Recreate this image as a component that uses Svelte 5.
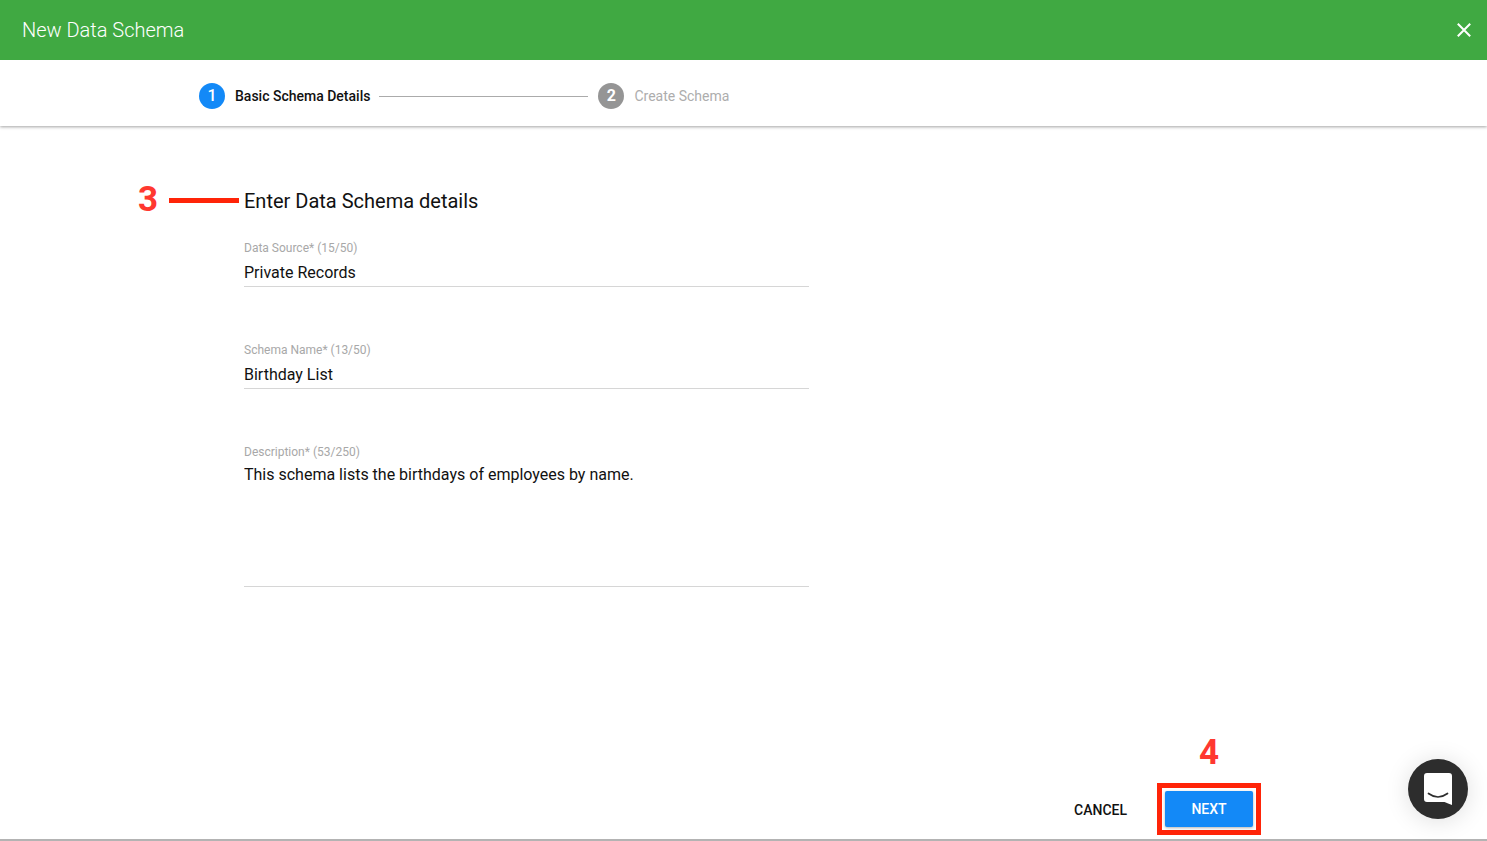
<script>
  let source = $state('Private Records');
  let name = $state('Birthday List');
  let description = $state('This schema lists the birthdays of employees by name.');
</script>

<div class="page">
  <header class="bar">
    <h1>New Data Schema</h1>
    <button class="close" type="button" aria-label="Close">
      <svg width="14" height="14" viewBox="0 0 14 14" aria-hidden="true">
        <path d="M0.8 0.8 13.2 13.2M13.2 0.8 0.8 13.2" stroke="#fff" stroke-width="2" />
      </svg>
    </button>
  </header>

  <nav class="steps" aria-label="Progress">
    <span class="dot active">1</span>
    <span class="step current">Basic Schema Details</span>
    <span class="line"></span>
    <span class="dot">2</span>
    <span class="step">Create Schema</span>
  </nav>

  <form class="content" onsubmit={(e) => e.preventDefault()}>
    <div class="fields">
      <div class="heading">
        <div class="callout"><span class="mark">3</span><span class="pointer"></span></div>
        <h2>Enter Data Schema details</h2>
      </div>
      <div class="field">
        <label for="source">Data Source* ({source.length}/50)</label>
        <input id="source" type="text" maxlength="50" bind:value={source} />
      </div>
      <div class="field">
        <label for="name">Schema Name* ({name.length}/50)</label>
        <input id="name" type="text" maxlength="50" bind:value={name} />
      </div>
      <div class="field">
        <label for="description">Description* ({description.length}/250)</label>
        <textarea id="description" maxlength="250" bind:value={description}></textarea>
      </div>
    </div>

    <footer class="actions">
      <button class="cancel" type="button">CANCEL</button>
      <div class="next-group">
        <span class="mark">4</span>
        <div class="frame"><button class="next" type="submit">NEXT</button></div>
      </div>
    </footer>
  </form>

  <button class="chat" type="button" aria-label="Open chat">
    <svg width="28" height="32" viewBox="0 0 28 32" aria-hidden="true">
      <path d="M3 0H25Q28 0 28 3V32Q24 30.5 20.5 29H3Q0 29 0 26V3Q0 0 3 0Z" fill="#fff" />
      <path d="M4.5 20.5Q14 27.5 23.5 20.5" fill="none" stroke="#2d2d2d" stroke-width="1.7" stroke-linecap="round" />
    </svg>
  </button>
</div>

<style>
  :global(body) {
    margin: 0;
    background: #fff;
  }
  .page {
    box-sizing: border-box;
    min-height: 100vh;
    display: flex;
    flex-direction: column;
    border-bottom: 2px solid #b3b3b3;
    font-family: Roboto, sans-serif;
    color: #111;
  }
  button,
  input,
  textarea {
    font-family: inherit;
    color: inherit;
    border: 0;
    padding: 0;
    margin: 0;
    background: none;
    border-radius: 0;
  }
  button {
    cursor: pointer;
  }
  .bar {
    display: flex;
    align-items: center;
    justify-content: space-between;
    height: 60px;
    padding: 0 16px 0 22px;
    background: #40a942;
    color: #fff;
    position: relative;
  }
  h1,
  h2 {
    margin: 0;
    font-size: 20px;
    line-height: 24px;
    font-weight: 400;
  }
  h1 {
    font-weight: 300;
  }
  .close {
    display: flex;
  }
  .steps {
    display: flex;
    align-items: center;
    height: 66px;
    box-sizing: border-box;
    padding: 6px 199px 0;
    box-shadow: 0 1px 3px rgba(0, 0, 0, 0.36);
  }
  .dot {
    width: 26px;
    height: 26px;
    border-radius: 50%;
    background: #959595;
    color: #fff;
    font-size: 16px;
    line-height: 26px;
    font-weight: 700;
    text-align: center;
  }
  .dot.active {
    background: #1389f7;
    font-weight: 500;
  }
  .step {
    margin-left: 10px;
    font-size: 14px;
    line-height: 20px;
    color: #adadad;
  }
  .step.current {
    color: #111;
    font-weight: 500;
  }
  .line {
    width: 209px;
    height: 1px;
    margin: 0 10px 0 9px;
    background: #ababab;
  }
  .content {
    flex: 1;
    display: flex;
    flex-direction: column;
    justify-content: space-between;
    padding: 63px 226px 4px 244px;
  }
  .fields {
    width: 38vw;
    display: flex;
    flex-direction: column;
  }
  .heading {
    position: relative;
    margin-bottom: 27px;
  }
  .callout {
    position: absolute;
    right: 100%;
    top: -7px;
    display: flex;
    align-items: center;
    gap: 11px;
    margin-right: 5px;
  }
  .mark {
    font-size: 35px;
    line-height: 36px;
    font-weight: 700;
    color: #ff3830;
  }
  .pointer {
    width: 70px;
    height: 5px;
    background: #ff2408;
  }
  .field {
    display: flex;
    flex-direction: column;
    margin-bottom: 55px;
  }
  .field:last-child {
    margin-bottom: 0;
  }
  label {
    font-size: 12px;
    line-height: 16px;
    color: #a8a8a8;
  }
  input,
  textarea {
    box-sizing: border-box;
    width: 100%;
    font-size: 16px;
    line-height: 20px;
    border-bottom: 1px solid #d6d6d6;
    outline: 0;
  }
  input {
    height: 31px;
    padding-top: 2px;
  }
  textarea {
    height: 127px;
    padding-top: 5px;
    resize: none;
  }
  .actions {
    display: flex;
    justify-content: flex-end;
    align-items: flex-end;
    gap: 30px;
  }
  .cancel,
  .next {
    font-size: 14px;
    line-height: 36px;
    font-weight: 500;
  }
  .cancel {
    padding-bottom: 7px;
  }
  .next-group {
    display: flex;
    flex-direction: column;
    align-items: center;
    gap: 12px;
  }
  .frame {
    border: 5px solid #ff2408;
    padding: 3px;
  }
  .next {
    display: block;
    width: 88px;
    height: 36px;
    border-radius: 2px;
    background: #1389f7;
    color: #fff;
    box-shadow: 0 1px 3px rgba(0, 0, 0, 0.3);
  }
  .chat {
    position: fixed;
    right: 19px;
    bottom: 22px;
    width: 60px;
    height: 60px;
    display: flex;
    align-items: center;
    justify-content: center;
    border-radius: 50%;
    background: #2d2d2d;
    box-shadow: 0 2px 24px rgba(0, 0, 0, 0.13);
  }
</style>
